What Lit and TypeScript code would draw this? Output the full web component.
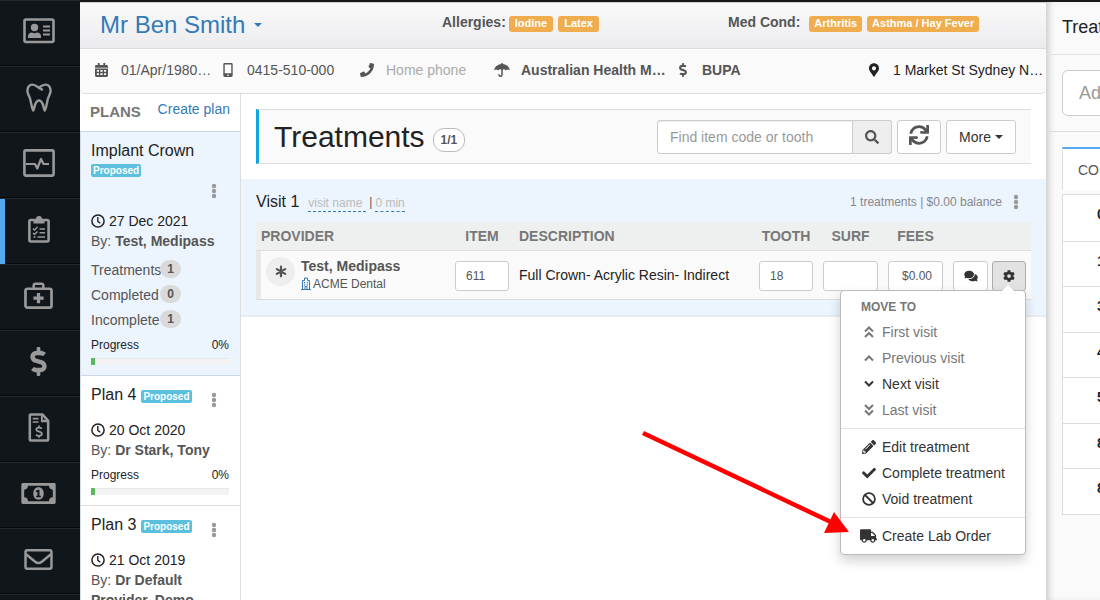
import { LitElement, html, css, svg, nothing } from "lit";
import { customElement, property } from "lit/decorators.js";
import { classMap } from "lit/directives/class-map.js";
import { styleMap } from "lit/directives/style-map.js";

const shared = css`
  * { box-sizing: border-box; }
  button, input { font-family: inherit; margin: 0; }
  button { cursor: pointer; }
  a { color: #337ab7; text-decoration: none; }
  h1, h2, h3, p, ul { margin: 0; padding: 0; font-weight: normal; }
  ul { list-style: none; }
  .kebab {
    display: block; width: 10px; height: 16px; padding: 0; border: 0;
    background: none; color: #999; line-height: 0;
  }
`;

type Shape = { box: string; body: unknown };

const shapes: Record<string, Shape> = {
  idcard: { box: "0 0 32 26", body: svg`
    <rect x="1.5" y="1.5" width="29" height="22.5" rx="1.5" fill="none" stroke="currentColor" stroke-width="2.6"/>
    <circle cx="11.5" cy="9.5" r="3.7"/><path d="M5 20v-1.5c0-2.600 1.800-4 4-4 1.500 1 3.500 1 5 0 2.200 0 4 1.400 4 4V20z"/>
    <path d="M20 7.500h7v2h-7zM20 11.500h7v2h-7zM20 15.500h7v2h-7z"/>` },
  tooth: { box: "0 0 26 29", body: svg`
    <path fill="none" stroke="currentColor" stroke-width="2.400" stroke-linejoin="round" stroke-linecap="round"
      d="M16 6.500C12.500 5.500 10 1.600 6.500 1.600 3 1.600 1.400 4.600 1.400 8c0 3 2 5 2.800 8 .8 3.500 1.200 8 3 11.500C8.800 26 8.300 17.500 13 17.500S17.200 26 18.800 27.500c1.800-3.500 2.200-8 3-11.500.8-3 2.800-5 2.800-8 0-3.400-1.600-6.400-5.100-6.400-2.500 0-4 1.800-6.500 2.800"/>` },
  monitor: { box: "0 0 32 28", body: svg`
    <rect x="1.400" y="1.400" width="29.200" height="25.200" rx="1.500" fill="none" stroke="currentColor" stroke-width="2.600"/>
    <path fill="none" stroke="currentColor" stroke-width="2.200" stroke-linejoin="round" d="M3 15h9l2.300 4.500L18 10l2.500 5H26"/>` },
  clipboard: { box: "0 0 22 28", body: svg`
    <rect x="1.400" y="5" width="19.200" height="21.500" rx="1.500" fill="none" stroke="currentColor" stroke-width="2.600"/>
    <path d="M5.500 4H8a3 3 0 0 1 6 0h2.500v4.500h-11z"/>
    <path fill="none" stroke="currentColor" stroke-width="1.500" d="M5 13.500l1.500 1.500 3-3M5 18l1.500 1.500 3-3M11.500 14H17M11.500 17.800H17M5.500 22h2M9.500 22H17"/>` },
  medkit: { box: "0 0 30 28", body: svg`
    <rect x="1.500" y="7" width="27" height="19.500" rx="2" fill="none" stroke="currentColor" stroke-width="2.800"/>
    <path fill="none" stroke="currentColor" stroke-width="2.600" d="M10 7V3.500c0-1.200.6-1.800 1.800-1.800h6.400c1.200 0 1.800.6 1.800 1.800V7"/>
    <path d="M13.300 11.500h3.400v3.600h3.600v3.400h-3.600v3.600h-3.400v-3.600H9.700v-3.400h3.600z"/>` },
  dollar: { box: "0 0 288 512", body: svg`<path d="M209.2 233.4l-108-31.6C88.7 198.2 80 186.5 80 173.5c0-16.3 13.2-29.5 29.5-29.5h66.3c12.2 0 24.2 3.7 34.2 10.500 6.1 4.1 14.3 3.1 19.500-2l34.800-34c7.1-6.900 6.1-18.400-1.800-24.500C238 74.800 207.400 64.100 176 64V16c0-8.800-7.200-16-16-16h-32c-8.800 0-16 7.200-16 16v48h-2.500C45.800 64-5.400 118.700.5 183.600c4.200 46.100 39.400 83.600 83.800 96.600l102.500 30c12.500 3.700 21.200 15.300 21.200 28.300 0 16.300-13.200 29.500-29.500 29.500h-66.300C100 368 88 364.300 78 357.500c-6.100-4.100-14.300-3.100-19.500 2l-34.800 34c-7.100 6.900-6.100 18.400 1.800 24.500 24.500 19.200 55.100 29.900 86.500 30v48c0 8.800 7.200 16 16 16h32c8.800 0 16-7.200 16-16v-48.200c46.600-.9 90.300-28.600 105.700-72.700 21.500-61.600-14.600-124.800-72.500-141.700z"/>` },
  invoice: { box: "0 0 22 30", body: svg`
    <path fill="none" stroke="currentColor" stroke-width="2.600" stroke-linejoin="round" d="M3 1.500h11.500L20.500 8v19.500a1 1 0 0 1-1 1H2.500a1 1 0 0 1-1-1v-25a1 1 0 0 1 1-1z"/>
    <path d="M13 1h2v6h6v2.500h-8zM4.500 5h6v1.700h-6zM4.500 8.500h6v1.700h-6z"/>
    <path fill="none" stroke="currentColor" stroke-width="1.800" d="M14 16.300c-.8-.9-1.900-1.200-3-1.200-1.600 0-2.800.7-2.800 2 0 3 5.800 1.500 5.800 4.400 0 1.300-1.200 2.100-2.900 2.100-1.300 0-2.400-.5-3.200-1.300M11 13v2M11 23.600v2"/>` },
  money: { box: "0 0 36 22", body: svg`
    <path fill-rule="evenodd" d="M1.500 0h33A1.500 1.500 0 0 1 36 1.500v19a1.500 1.500 0 0 1-1.500 1.500h-33A1.500 1.500 0 0 1 0 20.500v-19A1.500 1.500 0 0 1 1.500 0zM7 3c0 2.500-1.500 4-4 4v8c2.500 0 4 1.500 4 4h22c0-2.500 1.500-4 4-4V7c-2.500 0-4-1.500-4-4z"/>
    <path fill-rule="evenodd" d="M18 4.500c3.300 0 5.500 2.800 5.500 6.500s-2.200 6.500-5.500 6.500-5.500-2.800-5.500-6.500 2.200-6.500 5.500-6.500zM17.300 7l-2.300 1.400.7 1.400 1.200-.5v4H15.500V15h5v-1.700H19V7z"/>` },
  envelope: { box: "0 0 30 22", body: svg`
    <rect x="1.400" y="1.400" width="27.200" height="19.200" rx="1.800" fill="none" stroke="currentColor" stroke-width="2.600"/>
    <path fill="none" stroke="currentColor" stroke-width="2.600" d="M2 5.500l9.500 7.800c2.500 2 4.500 2 7 0L28 5.500"/>` },
  calendar: { box: "0 0 14 15", body: svg`
    <path fill-rule="evenodd" d="M3 0h2v2h4V0h2v2h1.500A1.500 1.500 0 0 1 14 3.500V5H0V3.500A1.500 1.500 0 0 1 1.500 2H3zM0 6h14v7.500a1.500 1.500 0 0 1-1.500 1.500h-11A1.500 1.500 0 0 1 0 13.500zM2 7.500v2h2.300v-2zM5.800 7.500v2h2.400v-2zM9.700 7.500v2H12v-2zM2 11v2h2.300v-2zM5.800 11v2h2.400v-2zM9.700 11v2H12v-2z"/>` },
  mobile: { box: "0 0 10 15", body: svg`
    <path fill-rule="evenodd" d="M1.500 0h7A1.500 1.500 0 0 1 10 1.500v12A1.500 1.500 0 0 1 8.500 15h-7A1.500 1.500 0 0 1 0 13.500v-12A1.500 1.500 0 0 1 1.500 0zM1.500 1.500v9.500h7V1.500zM5 12.200a.9.900 0 1 0 0 1.800.9.900 0 0 0 0-1.800z"/>` },
  phone: { box: "0 0 512 512", body: svg`<path d="M493.4 24.6l-104-24c-11.3-2.6-22.9 3.3-27.5 13.9l-48 112c-4.2 9.8-1.4 21.3 6.9 28l60.6 49.6c-36 76.7-98.9 140.5-177.2 177.2l-49.600-60.600c-6.800-8.300-18.200-11.100-28-6.900l-112 48C3.900 366.500-2 378.100.6 389.400l24 104C27.100 504.200 36.700 512 48 512c256.100 0 464-207.500 464-464 0-11.200-7.700-20.900-18.600-23.400z"/>` },
  umbrella: { box: "0 0 16 14", body: svg`
    <path d="M7.300 0h1.400v1.100C12.500 1.400 15.300 4 16 7.300c-1.400-1.300-3-1.200-4.200.2C10.500 6 9.300 5.800 8 7.500 6.700 5.800 5.500 6 4.200 7.500 3 6.100 1.400 6 0 7.300.7 4 3.500 1.400 7.300 1.100z"/>
    <path fill="none" stroke="currentColor" stroke-width="1.500" stroke-linecap="round" d="M8 6v5.700a1.500 1.500 0 0 1-3 0"/>` },
  marker: { box: "0 0 384 512", body: svg`<path d="M172.268 501.67C26.970 291.031 0 269.413 0 192 0 85.961 85.961 0 192 0s192 85.961 192 192c0 77.413-26.970 99.031-172.268 309.670-9.535 13.774-29.930 13.773-39.464 0zM192 272c44.183 0 80-35.817 80-80s-35.817-80-80-80-80 35.817-80 80 35.817 80 80 80z"/>` },
  search: { box: "0 0 512 512", body: svg`<path d="M505 442.7L405.3 343c-4.5-4.5-10.6-7-17-7H372c27.6-35.3 44-79.7 44-128C416 93.1 322.9 0 208 0S0 93.1 0 208s93.1 208 208 208c48.3 0 92.7-16.4 128-44v16.3c0 6.4 2.500 12.500 7 17l99.700 99.700c9.400 9.400 24.600 9.400 33.900 0l28.300-28.300c9.400-9.400 9.400-24.600.1-34zM208 336c-70.700 0-128-57.200-128-128 0-70.700 57.200-128 128-128 70.700 0 128 57.200 128 128 0 70.700-57.200 128-128 128z"/>` },
  sync: { box: "0 0 512 512", body: svg`<path d="M440.65 12.57l4 82.77A247.16 247.16 0 0 0 255.83 8C134.73 8 33.91 94.92 12.29 209.82A12 12 0 0 0 24.09 224h49.05a12 12 0 0 0 11.67-9.26 175.91 175.91 0 0 1 317-56.94l-101.46-4.86a12 12 0 0 0-12.57 12v47.41a12 12 0 0 0 12 12H500a12 12 0 0 0 12-12V12a12 12 0 0 0-12-12h-47.37a12 12 0 0 0-11.98 12.57zM255.83 432a175.61 175.61 0 0 1-146-77.8l101.8 4.87a12 12 0 0 0 12.57-12v-47.4a12 12 0 0 0-12-12H12a12 12 0 0 0-12 12V500a12 12 0 0 0 12 12h47.35a12 12 0 0 0 12-12.6l-4.15-82.57A247.17 247.17 0 0 0 255.83 504c121.11 0 221.93-86.92 243.55-201.82a12 12 0 0 0-11.8-14.18h-49.05a12 12 0 0 0-11.67 9.26A175.86 175.86 0 0 1 255.83 432z"/>` },
  caret: { box: "0 0 8 4", body: svg`<path d="M0 0h8L4 4z"/>` },
  kebab: { box: "0 0 10 16", body: svg`<circle cx="5" cy="3" r="2.200"/><circle cx="5" cy="8" r="2.200"/><circle cx="5" cy="13" r="2.200"/>` },
  clock: { box: "0 0 14 14", body: svg`<circle cx="7" cy="7" r="6.100" fill="none" stroke="currentColor" stroke-width="1.500"/><path fill="none" stroke="currentColor" stroke-width="1.400" d="M6.800 3v4.300l2.500 1.900"/>` },
  asterisk: { box: "0 0 12 12", body: svg`<path fill="none" stroke="currentColor" stroke-width="2.200" stroke-linecap="round" d="M6 1.200v9.600M1.800 3.600l8.400 4.800M10.200 3.600L1.800 8.400"/>` },
  building: { box: "0 0 10 13", body: svg`
    <path fill="none" stroke="currentColor" d="M1.500 12V3.500h2V1h3v2.500h2V12M0 12.500h10M4 12v-2.500h2V12"/>
    <path d="M3 5h1.200v1.200H3zM5.800 5H7v1.200H5.800zM3 7.200h1.200v1.200H3zM5.800 7.200H7v1.200H5.800z"/>` },
  comments: { box: "0 0 576 512", body: svg`<path d="M416 192c0-88.4-93.1-160-208-160S0 103.6 0 192c0 34.3 14.1 65.9 38 92-13.4 30.2-35.5 54.2-35.8 54.5-2.200 2.300-2.800 5.700-1.500 8.700S4.800 352 8 352c36.600 0 66.900-12.300 88.700-25 32.200 15.700 70.300 25 111.300 25 114.900 0 208-71.600 208-160zm122 220c23.900-26 38-57.700 38-92 0-66.900-53.500-124.200-129.300-148.100.9 6.600 1.300 13.300 1.300 20.100 0 105.900-107.700 192-240 192-10.800 0-21.300-.8-31.700-1.900C207.800 439.600 281.800 480 368 480c41 0 79.100-9.200 111.300-25 21.800 12.700 52.100 25 88.700 25 3.200 0 6.100-1.900 7.300-4.800 1.300-2.900.7-6.300-1.500-8.700-.3-.3-22.400-24.200-35.800-54.500z"/>` },
  cog: { box: "0 0 512 512", body: svg`<path d="M487.4 315.7l-42.6-24.6c4.3-23.2 4.3-47 0-70.2l42.6-24.6c4.9-2.8 7.1-8.6 5.5-14-11.1-35.6-30-67.8-54.7-94.6-3.8-4.1-10-5.1-14.8-2.3L380.8 110c-17.9-15.4-38.5-27.3-60.8-35.1V25.8c0-5.6-3.9-10.5-9.4-11.7-36.7-8.2-74.3-7.8-109.2 0-5.5 1.2-9.4 6.1-9.4 11.7V75c-22.2 7.9-42.8 19.8-60.8 35.1L88.7 85.5c-4.9-2.8-11-1.9-14.8 2.3-24.7 26.7-43.6 58.9-54.7 94.6-1.7 5.4.6 11.2 5.5 14L67.3 221c-4.3 23.2-4.3 47 0 70.2l-42.6 24.6c-4.9 2.8-7.1 8.6-5.5 14 11.1 35.6 30 67.8 54.7 94.6 3.8 4.1 10 5.1 14.8 2.3l42.6-24.6c17.9 15.4 38.5 27.3 60.8 35.1v49.2c0 5.6 3.9 10.5 9.4 11.7 36.7 8.2 74.3 7.8 109.2 0 5.5-1.2 9.4-6.1 9.4-11.7v-49.2c22.2-7.9 42.8-19.8 60.8-35.1l42.6 24.6c4.9 2.8 11 1.9 14.8-2.3 24.7-26.7 43.6-58.9 54.7-94.6 1.5-5.5-.7-11.3-5.6-14.1zM256 336c-44.1 0-80-35.9-80-80s35.9-80 80-80 80 35.9 80 80-35.9 80-80 80z"/>` },
  first: { box: "0 0 10 12", body: svg`<path fill="none" stroke="currentColor" stroke-width="2" d="M1 5.500l4-4 4 4M1 11l4-4 4 4"/>` },
  up: { box: "0 0 10 12", body: svg`<path fill="none" stroke="currentColor" stroke-width="2" d="M1 8.500l4-4 4 4"/>` },
  down: { box: "0 0 10 12", body: svg`<path fill="none" stroke="currentColor" stroke-width="2" d="M1 3.500l4 4 4-4"/>` },
  last: { box: "0 0 10 12", body: svg`<path fill="none" stroke="currentColor" stroke-width="2" d="M1 1l4 4 4-4M1 6.500l4 4 4-4"/>` },
  pencil: { box: "0 0 512 512", body: svg`<path d="M497.9 142.1l-46.1 46.1c-4.7 4.7-12.3 4.7-17 0l-111-111c-4.7-4.7-4.7-12.3 0-17l46.1-46.1c18.7-18.7 49.1-18.7 67.9 0l60.1 60.1c18.8 18.7 18.8 49.1 0 67.9zM284.2 99.8L21.6 362.4.4 483.9c-2.9 16.4 11.4 30.6 27.8 27.8l121.5-21.3 262.6-262.6c4.7-4.7 4.7-12.3 0-17l-111-111c-4.8-4.7-12.4-4.7-17.1 0zM124.1 339.9c-5.5-5.5-5.5-14.3 0-19.8l154-154c5.5-5.5 14.3-5.5 19.8 0s5.5 14.3 0 19.8l-154 154c-5.5 5.5-14.3 5.5-19.8 0zM88 424h48v36.3l-64.5 11.3-31.1-31.1L51.7 376H88v48z"/>` },
  check: { box: "0 0 512 512", body: svg`<path d="M173.898 439.404l-166.4-166.4c-9.997-9.997-9.997-26.206 0-36.204l36.203-36.204c9.997-9.998 26.207-9.998 36.204 0L192 312.69 432.095 72.596c9.997-9.997 26.207-9.997 36.204 0l36.203 36.204c9.997 9.997 9.997 26.206 0 36.204l-294.4 294.401c-9.998 9.997-26.207 9.997-36.204-.001z"/>` },
  ban: { box: "0 0 14 14", body: svg`<circle cx="7" cy="7" r="5.900" fill="none" stroke="currentColor" stroke-width="1.800"/><path stroke="currentColor" stroke-width="1.800" d="M3 3l8 8"/>` },
  truck: { box: "0 0 640 512", body: svg`<path d="M624 352h-16V243.9c0-12.7-5.1-24.9-14.1-33.9L494 110.1c-9-9-21.2-14.1-33.9-14.1H416V48c0-26.5-21.5-48-48-48H48C21.5 0 0 21.5 0 48v320c0 26.5 21.5 48 48 48h16c0 53 43 96 96 96s96-43 96-96h128c0 53 43 96 96 96s96-43 96-96h48c8.8 0 16-7.2 16-16v-32c0-8.8-7.2-16-16-16zM160 464c-26.5 0-48-21.5-48-48s21.5-48 48-48 48 21.5 48 48-21.5 48-48 48zm320 0c-26.5 0-48-21.5-48-48s21.5-48 48-48 48 21.5 48 48-21.5 48-48 48zm80-208H416V144h44.1l99.9 99.9V256z"/>` },
};

const icon = (name: string, width: number, height: number) => svg`
  <svg width=${width} height=${height} viewBox=${shapes[name].box} fill="currentColor" aria-hidden="true">${shapes[name].body}</svg>`;

const kebab = (label: string) => html`<button class="kebab" aria-label=${label}>${icon("kebab", 10, 16)}</button>`;

@customElement("side-nav")
class SideNav extends LitElement {
  static styles = [shared, css`
    :host { display: block; background: #11161a; overflow: hidden; }
    .item {
      display: flex; align-items: center; justify-content: center;
      height: 66px; padding: 0 8px 5px 5px; color: #999;
      border-top: 1px solid #22282c; box-shadow: inset 0 -1px #07090b;
    }
    .active { box-shadow: inset 5px 0 #55a9ee, inset 0 -1px #07090b; }
  `];
  items: [string, string, number, number][] = [
    ["idcard", "Patient", 32, 26], ["tooth", "Chart", 26, 29], ["monitor", "Clinical", 32, 28],
    ["clipboard", "Treatments", 22, 28], ["medkit", "Medical", 29, 27], ["dollar", "Fees", 17, 29],
    ["invoice", "Invoices", 22, 29], ["money", "Payments", 35, 21], ["envelope", "Messages", 29, 21],
    ["idcard", "More", 32, 26],
  ];
  render() {
    return html`<nav>${this.items.map(([name, label, w, h], i) => html`
      <a class=${classMap({ item: true, active: i === 3 })} href="#" aria-label=${label}>${icon(name, w, h)}</a>`)}</nav>`;
  }
}

@customElement("patient-header")
class PatientHeader extends LitElement {
  static styles = [shared, css`
    :host { display: block; color: #555; font-size: 14px; line-height: 20px; }
    .top {
      display: grid; grid-template-columns: 342fr 286fr 318fr; height: 47px; padding-left: 20px;
      background: linear-gradient(#fafafa, #ececef); border-bottom: 1px solid #ddd;
      border-top: 1px solid #ccc;
    }
    .name {
      display: flex; align-items: center; gap: 9px; padding: 0; border: 0; background: none;
      color: #337ab7; font-size: 24px; line-height: 28px; margin-top: 8px; align-self: start;
    }
    .alert { display: flex; align-items: center; gap: 5px; height: 20px; margin-top: 9px; }
    .alert b { margin-right: -2px; }
    .wide b { margin-right: 4px; }
    .tag {
      margin-top: 3px; padding: 0 6px; height: 16px; border-radius: 3px; background: #f0ad4e; color: #fff;
      font-weight: bold; font-size: 11px; line-height: 15px; white-space: nowrap;
    }
    .wide .tag { padding: 0 5px; }
    .info {
      display: grid; grid-template-columns: 126fr 139fr 135fr 181fr 191fr 182fr;
      align-items: center; height: 45px; padding: 0 0 2px 12px; background: #fafafa;
      border-bottom: 1px solid #ddd; border-radius: 0 0 5px 5px;
    }
    .cell { display: flex; align-items: center; gap: 11px; min-width: 0; }
    .glyph { display: flex; justify-content: center; flex: none; width: 18px; padding-left: 1px; }
    .text { overflow: hidden; white-space: nowrap; }
    .muted { color: #aaa; }
    .dark { color: #222; }
  `];
  render() {
    const cell = (name: string, w: number, h: number, text: unknown, dark = false) => html`
      <div class=${classMap({ cell: true, dark })}><span class="glyph">${icon(name, w, h)}</span><span class="text">${text}</span></div>`;
    return html`
      <div class="top">
        <button class="name">Mr Ben Smith ${icon("caret", 8, 4)}</button>
        <div class="alert"><b>Allergies:</b><span class="tag">Iodine</span><span class="tag">Latex</span></div>
        <div class="alert wide"><b>Med Cond:</b><span class="tag">Arthritis</span><span class="tag">Asthma / Hay Fever</span></div>
      </div>
      <div class="info">
        ${cell("calendar", 13, 14, "01/Apr/1980…")}
        ${cell("mobile", 10, 14, "0415-510-000")}
        ${cell("phone", 14, 14, html`<span class="muted">Home phone</span>`)}
        ${cell("umbrella", 16, 14, html`<b>Australian Health M…</b>`)}
        ${cell("dollar", 8, 14, html`<b>BUPA</b>`)}
        ${cell("marker", 10, 14, "1 Market St Sydney N…", true)}
      </div>`;
  }
}

type Plan = { title: string; date: string; by: string; counts?: [string, number][]; progress: number };

@customElement("plan-card")
class PlanCard extends LitElement {
  @property({ attribute: false }) plan!: Plan;
  static styles = [shared, css`
    :host { display: block; }
    .card {
      padding: 9px 11px 10px 10px; border-bottom: 1px solid #ddd; border-left: 1px solid #d5dde5;
      font-size: 14px; line-height: 20px; color: #222;
    }
    .selected { background: #ecf4fd; border-bottom-color: #c8d8e8; }
    .head { display: flex; justify-content: space-between; min-height: 35px; padding-right: 10px; }
    .selected .head { min-height: 70px; }
    .head .kebab { align-self: flex-end; margin-bottom: 12px; }
    .names { display: flex; align-items: center; gap: 5px; height: 20px; }
    .selected .names { display: block; }
    .title { font-size: 16px; line-height: 20px; white-space: nowrap; }
    .tag {
      display: block; width: fit-content; margin-top: 3px; padding: 0 2px; border-radius: 2px; background: #5bc0de;
      color: #fff; font-weight: bold; font-size: 10px; line-height: 13px;
    }
    .date { display: flex; align-items: center; gap: 4px; }
    .by { color: #555; }
    .counts { margin-top: 6px; color: #555; }
    .count { display: grid; grid-template-columns: 69px auto; justify-content: start; align-items: center; height: 25px; }
    .pill {
      margin-bottom: 2px; width: 21px; height: 18px; border-radius: 9px; background: #dadada; text-align: center;
      font-size: 12px; font-weight: bold; line-height: 18px;
    }
    .progress { display: flex; justify-content: space-between; margin-top: 5px; font-size: 12px; }
    .counts + .progress { margin-top: 3px; }
    .bar { height: 7px; margin-top: 3px; background: #f3f3f3; box-shadow: inset 0 1px 1px #e8e8e8; }
    .fill { height: 7px; min-width: 4px; background: #5cb85c; }
  `];
  render() {
    const p = this.plan;
    return html`
      <article class=${classMap({ card: true, selected: !!p.counts })}>
        <div class="head">
          <div class="names"><h3 class="title">${p.title}</h3><span class="tag">Proposed</span></div>
          ${kebab("Plan actions")}
        </div>
        <p class="date">${icon("clock", 14, 14)}<span>${p.date}</span></p>
        <p class="by">By: <b>${p.by}</b></p>
        ${p.counts ? html`<ul class="counts">${p.counts.map(([label, n]) => html`
          <li class="count"><span>${label}</span><span class="pill">${n}</span></li>`)}</ul>` : nothing}
        <div class="progress"><span>Progress</span><span>${p.progress}%</span></div>
        <div class="bar"><div class="fill" style=${styleMap({ width: `${p.progress}%` })}></div></div>
      </article>`;
  }
}

@customElement("plan-list")
class PlanList extends LitElement {
  static styles = [shared, css`
    :host { display: block; overflow: hidden; background: #fff; border-right: 1px solid #ddd; }
    .head {
      display: flex; justify-content: space-between; height: 38px; padding: 5px 10px 0; border-bottom: 1px solid #c8d8e8;
      font-size: 14px; line-height: 20px;
    }
    h2 { padding-top: 3px; font-size: 15px; font-weight: bold; color: #777; }
  `];
  plans: Plan[] = [
    { title: "Implant Crown", date: "27 Dec 2021", by: "Test, Medipass", progress: 0,
      counts: [["Treatments", 1], ["Completed", 0], ["Incomplete", 1]] },
    { title: "Plan 4", date: "20 Oct 2020", by: "Dr Stark, Tony", progress: 0 },
    { title: "Plan 3", date: "21 Oct 2019", by: "Dr Default Provider, Demo", progress: 0 },
  ];
  render() {
    return html`
      <div class="head"><h2>PLANS</h2><a href="#">Create plan</a></div>
      ${this.plans.map((plan) => html`<plan-card .plan=${plan}></plan-card>`)}`;
  }
}

@customElement("treatment-menu")
class TreatmentMenu extends LitElement {
  static styles = [shared, css`
    :host {
      display: block; width: 186px; padding: 5px 0; background: #fff; border: 1px solid #bbb;
      border-radius: 4px; box-shadow: 0 6px 12px rgba(0, 0, 0, 0.18); text-align: left;
    }
    .tip {
      position: absolute; top: -6px; right: 11px; width: 0; height: 0;
      border: 6px solid transparent; border-top: 0; border-bottom-color: #fff;
    }
    h3 { padding: 0 20px 1px; font-size: 12px; font-weight: bold; line-height: 22px; color: #777; }
    .group + .group { margin-top: 5px; padding-top: 5px; border-top: 1px solid #e2e2e2; }
    .item {
      display: flex; align-items: center; gap: 4px; width: 100%; height: 26px; padding: 0 0 0 18px; border: 0;
      background: none; color: #333; font-size: 14px; line-height: 20px; white-space: nowrap;
    }
    .item:disabled { color: #777; }
    .glyph { display: flex; justify-content: center; width: 19px; }
    .pointer { position: absolute; top: 139px; left: -201px; pointer-events: none; }
  `];
  groups: [string, number, number, string, boolean?][][] = [
    [["first", 10, 12, "First visit", true], ["up", 10, 12, "Previous visit", true],
      ["down", 10, 12, "Next visit"], ["last", 10, 12, "Last visit", true]],
    [["pencil", 14, 14, "Edit treatment"], ["check", 14, 14, "Complete treatment"], ["ban", 14, 14, "Void treatment"]],
    [["truck", 17, 14, "Create Lab Order"]],
  ];
  render() {
    return html`
      <span class="tip"></span>
      ${this.groups.map((group, i) => html`
        <div class="group">
          ${i === 0 ? html`<h3>MOVE TO</h3>` : nothing}
          ${group.map(([name, w, h, label, off]) => html`
            <button class="item" ?disabled=${off}><span class="glyph">${icon(name, w, h)}</span>${label}</button>`)}
        </div>`)}
      <svg class="pointer" width="210" height="105" viewBox="0 0 210 105" fill="#f00" aria-hidden="true">
        <path d="M3 3l190 90" stroke="#f00" stroke-width="4.500"/><path d="M194 82l15 20-25 1z"/>
      </svg>`;
  }
}

@customElement("treatment-view")
class TreatmentView extends LitElement {
  static styles = [shared, css`
    :host { display: block; background: #fff; padding-top: 15px; color: #222; font-size: 14px; line-height: 20px; }
    .bar {
      display: flex; align-items: center; height: 55px; margin: 0 15px; padding: 0 15px; background: #fafafa;
      border: 1px solid #ddd; border-right: 0; border-left: 3px solid #0fa5dd;
    }
    h1 { font-size: 30px; line-height: 34px; }
    .total {
      margin: 6px auto 0 8px; padding: 0 7px; border: 1px solid #bbb; border-radius: 11px; background: #fff;
      font-size: 12px; font-weight: bold; line-height: 22px; color: #555;
    }
    .search { display: flex; width: 235px; }
    .query {
      flex: 1; min-width: 0; height: 34px; padding: 0 12px; border: 1px solid #ccc; border-radius: 3px 0 0 3px;
      font-size: 14px; background: #fff; box-shadow: inset 0 1px 1px #eee;
    }
    ::placeholder { color: #999; opacity: 1; }
    .btn {
      display: flex; align-items: center; justify-content: center; gap: 4px; height: 34px; padding: 0;
      border: 1px solid #ccc; border-radius: 3px; background: #fff; color: #333; font-size: 14px;
    }
    .find { width: 39px; border-left: 0; border-radius: 0 3px 3px 0; background: #eee; color: #555; }
    .reload { width: 44px; margin-left: 5px; padding-bottom: 3px; color: #555; }
    .more { width: 70px; margin-left: 5px; }
    .visit { margin-top: 15px; padding: 11px 15px 15px; background: #ecf4fd; border-bottom: 2px solid #e9ecef; }
    .visit-head { display: flex; align-items: center; height: 24px; padding-right: 10px; color: #999; font-size: 12px; }
    h2 { margin-right: 9px; font-size: 16px; color: #222; }
    .edit { color: #bbb; line-height: 16px; border-bottom: 1px dashed #337ab7; margin-top: 3px; }
    .long { padding-right: 4px; }
    .split { margin: 0 3px; color: #555; }
    .sum { margin-left: auto; margin-right: 9px; color: #888; }
    table { width: 100%; margin-top: 8px; border-collapse: collapse; table-layout: fixed; }
    th { height: 28px; padding: 0 5px; background: #eef0ef; border-bottom: 1px solid #ddd; color: #777; font-weight: bold; }
    .start { text-align: left; }
    td { padding: 10px 5px 8px; height: 49px; background: #fafafa; border-bottom: 1px solid #ddd; vertical-align: top; }
    td.who { padding: 5px 5px 5px 10px; box-shadow: inset 5px 0 #e8e8e8; }
    .c-who { width: 194px; } .c-box { width: 64px; } .c-mid { width: 65px; } .c-act { width: 83px; }
    .provider { display: flex; gap: 6px; }
    .avatar {
      display: flex; align-items: center; justify-content: center; width: 29px; height: 29px; margin-top: 1px;
      border-radius: 15px; background: #eee; color: #555;
    }
    .provider b, .clinic { display: block; color: #555; }
    .clinic { display: flex; align-items: center; gap: 2px; font-size: 12px; line-height: 16px; }
    .clinic svg { color: #337ab7; }
    .desc { display: block; padding-top: 4px; }
    .field {
      display: block; width: 100%; height: 30px; padding: 0 10px; border: 1px solid #ccc; border-radius: 3px;
      background: #fff; color: #555; font-size: 12px;
    }
    .fee { text-align: right; }
    .actions { display: flex; gap: 4px; }
    .small { width: 35px; height: 30px; }
    .gear { width: 34px; background: #e2e2e2; border-color: #adadad; }
    .anchor { position: relative; }
    treatment-menu { position: absolute; top: 100%; right: 0; margin-top: -1px; z-index: 2; }
  `];
  render() {
    return html`
      <div class="bar">
        <h1>Treatments</h1><span class="total">1/1</span>
        <div class="search">
          <input class="query" aria-label="Find item code or tooth" placeholder="Find item code or tooth">
          <button class="btn find" aria-label="Search">${icon("search", 14, 14)}</button>
        </div>
        <button class="btn reload" aria-label="Refresh">${icon("sync", 20, 20)}</button>
        <button class="btn more">More ${icon("caret", 8, 4)}</button>
      </div>
      <section class="visit">
        <div class="visit-head">
          <h2>Visit 1</h2><a class="edit long" href="#">visit name</a><span class="split">|</span><a class="edit" href="#">0 min</a>
          <span class="sum">1 treatments | $0.00 balance</span>${kebab("Visit actions")}
        </div>
        <table>
          <colgroup>
            <col class="c-who"><col class="c-box"><col><col class="c-box"><col class="c-mid"><col class="c-mid"><col class="c-act">
          </colgroup>
          <thead><tr><th class="start">PROVIDER</th><th>ITEM</th><th class="start">DESCRIPTION</th><th>TOOTH</th><th>SURF</th><th>FEES</th><th></th></tr></thead>
          <tbody><tr>
            <td class="who"><div class="provider">
              <span class="avatar">${icon("asterisk", 12, 13)}</span>
              <div><b>Test, Medipass</b><span class="clinic">${icon("building", 10, 13)}ACME Dental</span></div>
            </div></td>
            <td><input class="field" aria-label="Item" .value=${"611"}></td>
            <td><span class="desc">Full Crown- Acrylic Resin- Indirect</span></td>
            <td><input class="field" aria-label="Tooth" .value=${"18"}></td>
            <td><input class="field" aria-label="Surface"></td>
            <td><input class="field fee" aria-label="Fees" .value=${"$0.00"}></td>
            <td><div class="actions">
              <button class="btn small" aria-label="Comments">${icon("comments", 14, 12)}</button>
              <div class="anchor">
                <button class="btn small gear" aria-label="Treatment options">${icon("cog", 12, 12)}</button>
                <treatment-menu></treatment-menu>
              </div>
            </div></td>
          </tr></tbody>
        </table>
      </section>`;
  }
}

@customElement("item-panel")
class ItemPanel extends LitElement {
  static styles = [shared, css`
    :host {
      display: block; overflow: hidden; background: #fafafa; color: #222; border-top: 2px solid #15191c;
      box-shadow: inset 6px 0 6px -3px #ccc;
    }
    .inner { width: 300px; }
    h2 { height: 53px; padding: 14px 16px; border-bottom: 1px solid #e2e2e2; font-size: 18px; line-height: 22px; }
    .find { height: 77px; padding: 15px 16px; border-bottom: 1px solid #ddd; }
    .box {
      width: 100%; height: 46px; padding: 0 16px; border: 1px solid #ccc; border-radius: 6px; background: #fff; font-size: 18px;
    }
    ::placeholder { color: #999; opacity: 1; }
    .tab {
      display: block; height: 43px; margin: 15px 16px 4px; padding: 0 15px; border: 0; border-top: 2px solid #55a9ee;
      border-left: 1px solid #ddd; background: #fff; color: #555; font-size: 14px; width: 268px; text-align: left;
    }
    ul {
      display: grid; grid-auto-rows: 1fr; height: 321px; margin: 0 16px; border: 1px solid #ddd; background: #fff;
    }
    li { padding: 9px 34px; font-size: 14px; font-weight: bold; line-height: 20px; }
    li + li { border-top: 1px solid #ddd; }
  `];
  render() {
    return html`<div class="inner">
      <h2>Treat</h2>
      <div class="find"><input class="box" aria-label="Ad" placeholder="Ad"></div>
      <button class="tab">CO</button>
      <ul>${["0", "1", "3", "4", "5", "8", "8"].map((n) => html`<li>${n}</li>`)}</ul>
    </div>`;
  }
}

@customElement("app-root")
class AppRoot extends LitElement {
  static styles = [shared, css`
    :host {
      display: grid; grid-template-columns: 80px minmax(0, 1fr) 54px; height: 100vh; overflow: hidden;
      font-family: "Liberation Sans", Arial, sans-serif; background: #fff;
    }
    main { display: flex; flex-direction: column; min-height: 0; border-top: 2px solid #15191c; }
    .columns { display: grid; grid-template-columns: 161px minmax(0, 1fr); flex: 1; min-height: 0; }
    plan-list, side-nav, item-panel { min-height: 0; }
  `];
  render() {
    return html`
      <side-nav></side-nav>
      <main>
        <patient-header></patient-header>
        <div class="columns"><plan-list></plan-list><treatment-view></treatment-view></div>
      </main>
      <item-panel></item-panel>`;
  }
}
